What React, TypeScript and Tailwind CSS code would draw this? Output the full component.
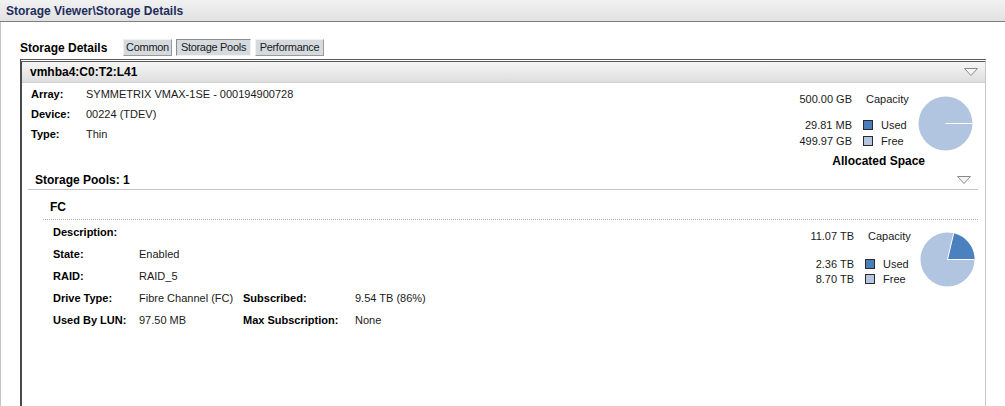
import React from 'react';

const FONT = "font-['Liberation_Sans',Arial,sans-serif]";

function Pie({ used }: { used: number }) {
  // used = fraction 0..1, slice goes counter-clockwise from 3 o'clock
  const r = 27;
  const c = 27.5;
  const a = used * Math.PI * 2;
  const x = c + r * Math.cos(a);
  const y = c - r * Math.sin(a);
  const large = used > 0.5 ? 1 : 0;
  return (
    <svg width="55" height="55" viewBox="0 0 55 55" className="shrink-0">
      <circle cx={c} cy={c} r={r} fill="#b1c5e0" />
      {used > 0.001 && (
        <path
          d={`M${c} ${c} L${c + r} ${c} A${r} ${r} 0 ${large} 0 ${x} ${y} Z`}
          fill="#4b81bf"
        />
      )}
      <line x1={c} y1={c} x2={c + r} y2={c} stroke="#fff" strokeWidth="1" />
      {used > 0.001 && <line x1={c} y1={c} x2={x} y2={y} stroke="#fff" strokeWidth="1" />}
    </svg>
  );
}

function Swatch({ color }: { color: string }) {
  return <span className={`inline-block h-[10px] w-[10px] border border-[#2b2b2b] ${color}`} />;
}

function Capacity({
  capacity,
  used,
  free,
  fraction,
  usedGap,
  freeGap,
  pieTop,
}: {
  capacity: string;
  used: string;
  free: string;
  fraction: number;
  usedGap: string;
  freeGap?: string;
  pieTop: string;
}) {
  return (
    <div className="flex">
      <div className="flex w-[146px] flex-col text-[#1a1a1a]">
        <div className="flex h-[14px] items-center">
          <span className="w-[80px] text-right">{capacity}</span>
          <span className="pl-[14px]">Capacity</span>
        </div>
        <div className={`flex h-[16px] items-center ${usedGap}`}>
          <span className="w-[80px] text-right">{used}</span>
          <span className="ml-[11px] flex items-center">
            <Swatch color="bg-[#4a7ebb]" />
          </span>
          <span className="pl-[8px]">Used</span>
        </div>
        <div className={`flex h-[16px] items-center ${freeGap ?? ''}`}>
          <span className="w-[80px] text-right">{free}</span>
          <span className="ml-[11px] flex items-center">
            <Swatch color="bg-[#b4c6df]" />
          </span>
          <span className="pl-[8px]">Free</span>
        </div>
      </div>
      <div className={pieTop}>
        <Pie used={fraction} />
      </div>
    </div>
  );
}

function Triangle() {
  return (
    <svg width="14" height="8" viewBox="0 0 14 8">
      <path d="M0.5 0.5 L13.5 0.5 L7 7.5 Z" fill="#f4f4f4" stroke="#8a8a8a" strokeWidth="1" />
    </svg>
  );
}

function Tab({ label, width, active }: { label: string; width: string; active?: boolean }) {
  return (
    <div
      className={`flex h-[17px] items-center justify-center bg-[#d5dadf] text-[#1a1a1a] ${width} ${
        active
          ? 'border-t border-l border-t-[#8c8c8c] border-l-[#8c8c8c] border-r border-b border-r-[#f2f2f2] border-b-[#f2f2f2]'
          : 'border-t border-l border-t-[#f0f0f0] border-l-[#f0f0f0] border-r border-b border-r-[#9a9a9a] border-b-[#9a9a9a]'
      }`}
    >
      <span className="tracking-[-0.3px]">{label}</span>
    </div>
  );
}

export default function App() {
  return (
    <div className={`flex h-[406px] w-[1005px] flex-col overflow-hidden bg-white text-[11px] leading-none ${FONT}`}>
      {/* Title bar */}
      <div className="flex h-[22px] shrink-0 items-center border-b border-[#7d7d7d] bg-gradient-to-b from-[#f1f1f1] to-[#e2e2e2] pl-[6px] font-bold text-[12px] text-[#1e2d5c]">
        Storage Viewer\Storage Details
      </div>

      <div className="flex flex-1 flex-col border-l border-[#c6c6c6] pl-[19px] pr-[19px] pt-[17px]">
        {/* Tabs row */}
        <div className="flex h-[17px] items-center">
          <span className="w-[103px] font-bold text-[12px] text-black">Storage Details</span>
          <div className="flex gap-[4px]">
            <Tab label="Common" width="w-[49px]" />
            <Tab label="Storage Pools" width="w-[75px]" active />
            <Tab label="Performance" width="w-[69px]" />
          </div>
        </div>

        {/* Panel */}
        <div className="mt-[3px] flex flex-1 flex-col border-t-[3px] border-double border-t-[#5a5a5a] border-l-2 border-l-[#4a4a4a] border-r border-r-[#c8c8c8]">
          <div className="flex h-[21px] shrink-0 items-center justify-between border-b border-[#cfcfcf] bg-gradient-to-b from-[#f6f6f6] to-[#dedede] pl-[8px] pr-[7px]">
            <span className="font-bold text-[12px] text-black">vmhba4:C0:T2:L41</span>
            <Triangle />
          </div>

          {/* Device info */}
          <div className="flex justify-between">
            <div className="flex flex-col pl-[9px] pt-[1px]">
              {[
                ['Array:', 'SYMMETRIX VMAX-1SE - 000194900728'],
                ['Device:', '00224 (TDEV)'],
                ['Type:', 'Thin'],
              ].map(([k, v]) => (
                <div key={k} className="flex h-[20px] items-center">
                  <span className="w-[55px] font-bold text-black">{k}</span>
                  <span className="text-[#1a1a1a]">{v}</span>
                </div>
              ))}
            </div>
            <div className="flex flex-col items-end pr-[12px] pt-[9px]">
              <Capacity
                capacity="500.00 GB"
                used="29.81 MB"
                free="499.97 GB"
                fraction={0.00006}
                usedGap="mt-[11px]"
                pieTop="mt-[4px]"
              />
              <div className="mt-[3px] flex h-[14px] items-center pr-[48px] font-bold text-[12px] text-black">
                Allocated Space
              </div>
            </div>
          </div>

          {/* Storage pools */}
          <div className="ml-[6px] mr-[7px] mt-[2px] flex h-[20px] items-center justify-between border-b border-[#c4c4c4] pl-[7px] pr-[7px]">
            <span className="font-bold text-[12px] text-black">Storage Pools: 1</span>
            <Triangle />
          </div>

          <div className="ml-[21px] mr-[7px] flex flex-col">
            <div className="flex h-[30px] items-center border-b border-dotted border-[#a8a8a8] pl-[7px] pt-[5px] font-bold text-[12px] text-black">
              FC
            </div>
            <div className="flex justify-between">
              <div className="flex flex-col pl-[10px] pt-[1px]">
                <div className="flex h-[22px] items-center">
                  <span className="font-bold text-black">Description:</span>
                </div>
                {[
                  ['State:', 'Enabled', '', ''],
                  ['RAID:', 'RAID_5', '', ''],
                  ['Drive Type:', 'Fibre Channel (FC)', 'Subscribed:', '9.54 TB (86%)'],
                  ['Used By LUN:', '97.50 MB', 'Max Subscription:', 'None'],
                ].map(([k, v, k2, v2]) => (
                  <div key={k} className="flex h-[22px] items-center">
                    <span className="w-[86px] font-bold text-black">{k}</span>
                    <span className="w-[104px] text-[#1a1a1a]">{v}</span>
                    <span className="w-[112px] font-bold text-black">{k2}</span>
                    <span className="text-[#1a1a1a]">{v2}</span>
                  </div>
                ))}
              </div>
              <div className="flex flex-col items-end pr-[5px] pt-[9px]">
                <div className="-mr-[2px]">
                  <Capacity
                    capacity="11.07 TB"
                    used="2.36 TB"
                    free="8.70 TB"
                    fraction={2.36 / 11.07}
                    usedGap="mt-[13px]"
                    freeGap="-mt-[1px]"
                    pieTop="mt-[3px]"
                  />
                </div>
              </div>
            </div>
          </div>
        </div>
      </div>
    </div>
  );
}
